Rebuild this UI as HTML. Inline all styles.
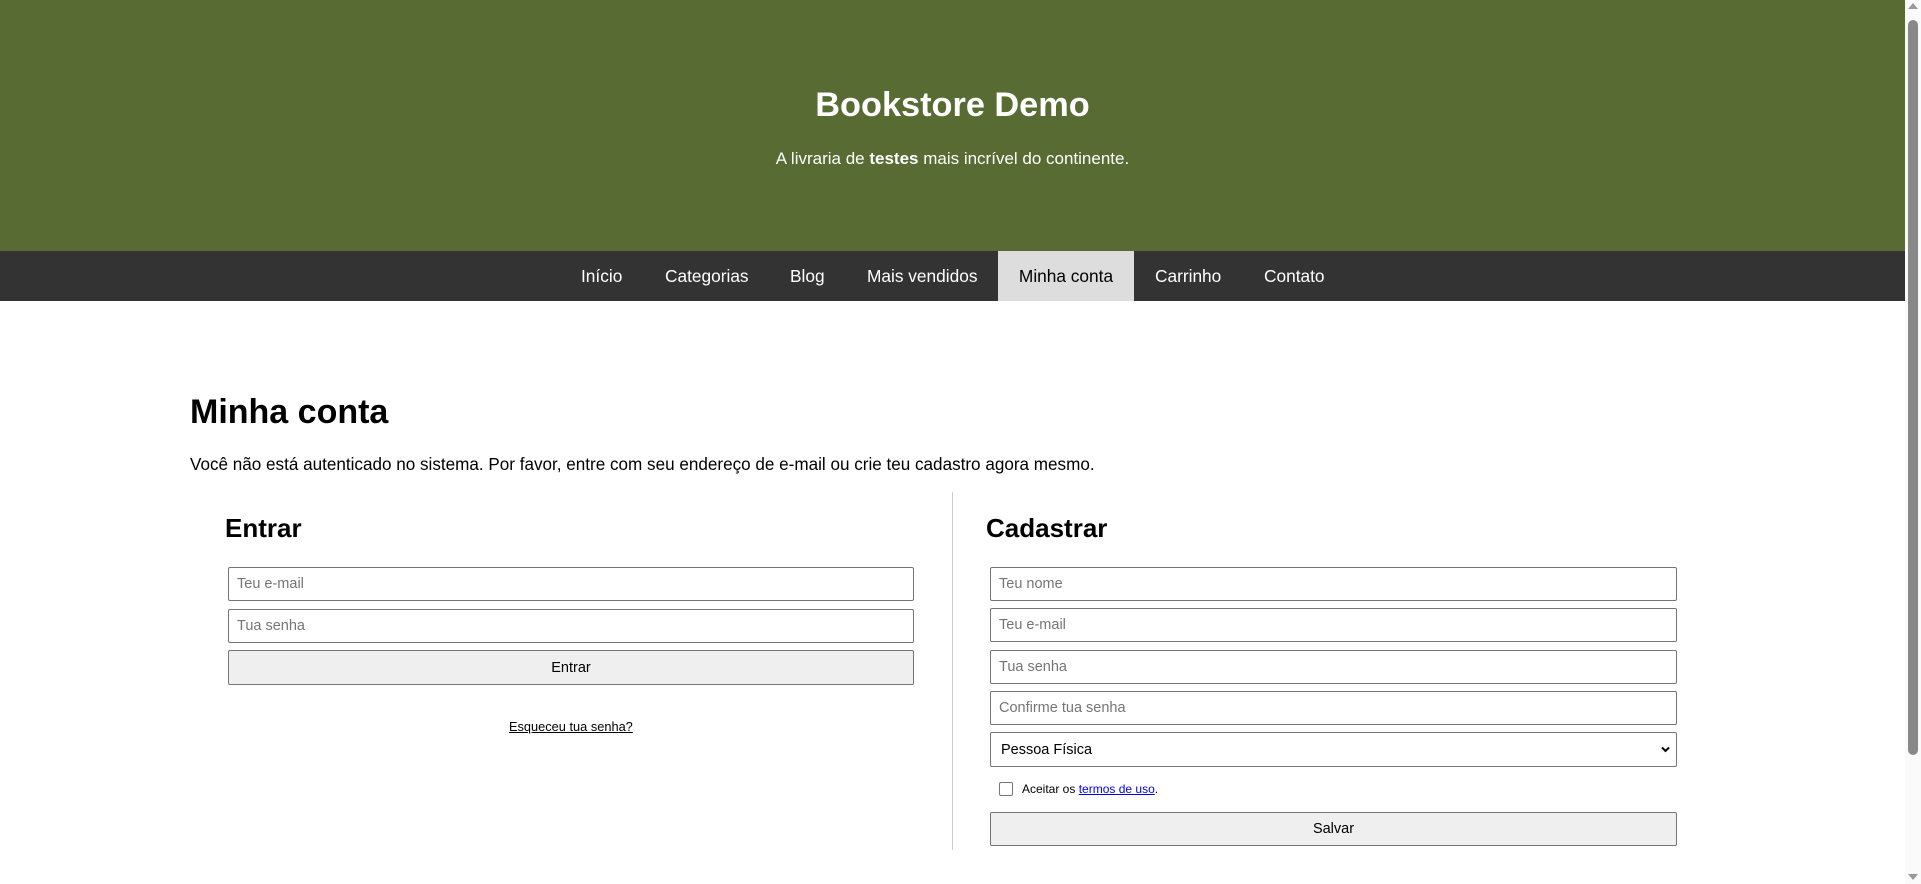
<!DOCTYPE html>
<html><head><meta charset="utf-8"><style>
*{box-sizing:border-box;margin:0;padding:0}
body{width:1921px;height:884px;overflow:hidden;background:#fff;font-family:"Liberation Sans",Arial,sans-serif;position:relative;color:#000}
.hdr{position:absolute;left:0;top:0;width:1905px;height:251px;background:#576b32;color:#fff;text-align:center}
.hdr h1{position:absolute;top:85px;width:100%;font-size:34.3px;font-weight:bold;line-height:40px}
.hdr p{position:absolute;top:149px;width:100%;font-size:17px;line-height:20px}
.nav{position:absolute;left:0;top:251px;width:1905px;height:50px;background:#333}
.nav span{position:absolute;top:0;height:50px;line-height:50px;font-size:17.3px;color:#fff;padding:0 21px;white-space:nowrap}
.nav span.act{background:#ddd;color:#000;text-align:center;padding:0}
.a{position:absolute;white-space:nowrap}
.in{position:absolute;height:34px;border:1px solid #767676;border-radius:2px;background:#fff;font-size:14.5px;color:#757575;line-height:33px;padding-left:8px;white-space:nowrap}
.btn{position:absolute;height:35px;border:1px solid #767676;border-radius:2px;background:#efefef;font-size:14.5px;color:#000;line-height:34px;text-align:center}
.sb{position:absolute;left:1905px;top:0;width:16px;height:884px;background:#fafafa}
</style></head><body>
<div class="hdr"><h1>Bookstore Demo</h1><p>A livraria de <b>testes</b> mais incrível do continente.</p></div>
<div class="nav">
<span style="left:560px">Início</span>
<span style="left:644px">Categorias</span>
<span style="left:769px">Blog</span>
<span style="left:846px">Mais vendidos</span>
<span class="act" style="left:998px;width:136px">Minha conta</span>
<span style="left:1134px">Carrinho</span>
<span style="left:1243px">Contato</span>
</div>
<div class="a" style="left:190px;top:390px;font-size:34px;font-weight:bold;line-height:44px">Minha conta</div>
<div class="a" style="left:190px;top:455px;font-size:17.1px;line-height:20px">Você não está autenticado no sistema. Por favor, entre com seu endereço de e-mail ou crie teu cadastro agora mesmo.</div>
<div class="a" style="left:952px;top:492px;width:1px;height:358px;background:#ccc"></div>
<div class="a" style="left:225px;top:512px;font-size:26px;font-weight:bold;line-height:32px">Entrar</div>
<div class="in" style="left:228px;top:567px;width:686px">Teu e-mail</div>
<div class="in" style="left:228px;top:609px;width:686px">Tua senha</div>
<div class="btn" style="left:228px;top:650px;width:686px">Entrar</div>
<div class="a" style="left:509px;top:719px;font-size:12.8px;text-decoration:underline;line-height:16px">Esqueceu tua senha?</div>
<div class="a" style="left:986px;top:512px;font-size:26px;font-weight:bold;line-height:32px">Cadastrar</div>
<div class="in" style="left:990px;top:567px;width:687px">Teu nome</div>
<div class="in" style="left:990px;top:608px;width:687px">Teu e-mail</div>
<div class="in" style="left:990px;top:650px;width:687px">Tua senha</div>
<div class="in" style="left:990px;top:691px;width:687px">Confirme tua senha</div>
<div class="in" style="left:990px;top:732px;width:687px;height:35px;color:#000;padding-left:10px;line-height:34px">Pessoa Física
<svg style="position:absolute;right:6px;top:13px" width="9" height="7" viewBox="0 0 9 7"><path d="M1 1.5l3.5 3.5 3.5-3.5" stroke="#000" stroke-width="2" fill="none"/></svg></div>
<div class="a" style="left:999px;top:782px;width:14px;height:14px;border:1px solid #767676;border-radius:2px;background:#fff"></div>
<div class="a" style="left:1022px;top:781px;font-size:12px;line-height:16px">Aceitar os <span style="color:#00e;text-decoration:underline">termos de uso</span>.</div>
<div class="btn" style="left:990px;top:812px;width:687px;height:34px;line-height:33px">Salvar</div>
<div class="sb"><div style="position:absolute;left:3px;top:20px;width:10px;height:735px;background:#888;border-radius:5px"></div>
<svg style="position:absolute;left:3px;top:3px" width="10" height="6"><path d="M0 6L5 0 10 6z" fill="#999"/></svg>
<svg style="position:absolute;left:3px;top:874px" width="10" height="6"><path d="M0 0L5 6 10 0z" fill="#999"/></svg></div>
</body></html>
